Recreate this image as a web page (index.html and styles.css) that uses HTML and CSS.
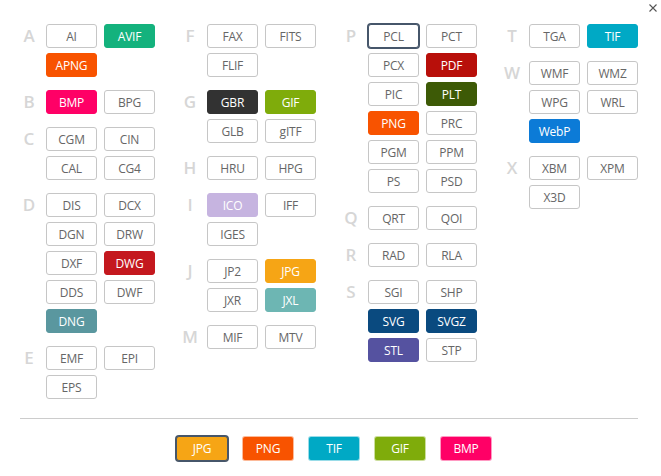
FILE: index.html
```html
<!DOCTYPE html>
<html>
<head>
<meta charset="utf-8">
<link rel="stylesheet" href="styles.css">
</head>
<body>
<div class="dialog">
  <div class="topbar">
    <svg class="close" width="8" height="8" viewBox="0 0 8 8"><path d="M0.5 0.5 L7.5 7.5 M7.5 0.5 L0.5 7.5" stroke="#555" stroke-width="1.1" fill="none"/></svg>
  </div>
  <div class="main">
    <div class="col">
      <div class="group"><div class="letter">A</div><div class="btns">
        <span class="b">AI</span><span class="b c avif">AVIF</span><span class="b c png">APNG</span></div></div>
      <div class="group"><div class="letter">B</div><div class="btns">
        <span class="b c bmp">BMP</span><span class="b">BPG</span></div></div>
      <div class="group"><div class="letter">C</div><div class="btns">
        <span class="b">CGM</span><span class="b">CIN</span><span class="b">CAL</span><span class="b">CG4</span></div></div>
      <div class="group"><div class="letter">D</div><div class="btns">
        <span class="b">DIS</span><span class="b">DCX</span><span class="b">DGN</span><span class="b">DRW</span><span class="b">DXF</span><span class="b c dwg">DWG</span><span class="b">DDS</span><span class="b">DWF</span><span class="b c dng">DNG</span></div></div>
      <div class="group"><div class="letter">E</div><div class="btns">
        <span class="b">EMF</span><span class="b">EPI</span><span class="b">EPS</span></div></div>
    </div>
    <div class="col">
      <div class="group"><div class="letter">F</div><div class="btns">
        <span class="b">FAX</span><span class="b">FITS</span><span class="b">FLIF</span></div></div>
      <div class="group"><div class="letter">G</div><div class="btns">
        <span class="b c gbr">GBR</span><span class="b c gif">GIF</span><span class="b">GLB</span><span class="b">gITF</span></div></div>
      <div class="group"><div class="letter">H</div><div class="btns">
        <span class="b">HRU</span><span class="b">HPG</span></div></div>
      <div class="group"><div class="letter">I</div><div class="btns">
        <span class="b c ico">ICO</span><span class="b">IFF</span><span class="b">IGES</span></div></div>
      <div class="group"><div class="letter">J</div><div class="btns">
        <span class="b">JP2</span><span class="b c jpg">JPG</span><span class="b">JXR</span><span class="b c jxl">JXL</span></div></div>
      <div class="group"><div class="letter">M</div><div class="btns">
        <span class="b">MIF</span><span class="b">MTV</span></div></div>
    </div>
    <div class="col">
      <div class="group"><div class="letter">P</div><div class="btns">
        <span class="b sel">PCL</span><span class="b">PCT</span><span class="b">PCX</span><span class="b c pdf">PDF</span><span class="b">PIC</span><span class="b c plt">PLT</span><span class="b c png">PNG</span><span class="b">PRC</span><span class="b">PGM</span><span class="b">PPM</span><span class="b">PS</span><span class="b">PSD</span></div></div>
      <div class="group"><div class="letter">Q</div><div class="btns">
        <span class="b">QRT</span><span class="b">QOI</span></div></div>
      <div class="group"><div class="letter">R</div><div class="btns">
        <span class="b">RAD</span><span class="b">RLA</span></div></div>
      <div class="group"><div class="letter">S</div><div class="btns">
        <span class="b">SGI</span><span class="b">SHP</span><span class="b c svg">SVG</span><span class="b c svg">SVGZ</span><span class="b c stl">STL</span><span class="b">STP</span></div></div>
    </div>
    <div class="col">
      <div class="group"><div class="letter">T</div><div class="btns">
        <span class="b">TGA</span><span class="b c tif">TIF</span></div></div>
      <div class="group"><div class="letter">W</div><div class="btns">
        <span class="b">WMF</span><span class="b">WMZ</span><span class="b">WPG</span><span class="b">WRL</span><span class="b c webp">WebP</span></div></div>
      <div class="group"><div class="letter">X</div><div class="btns">
        <span class="b">XBM</span><span class="b">XPM</span><span class="b">X3D</span></div></div>
    </div>
  </div>
  <div class="divider"></div>
  <div class="recent">
    <span class="rb jpg sel">JPG</span>
    <span class="rb png">PNG</span>
    <span class="rb tif">TIF</span>
    <span class="rb gif">GIF</span>
    <span class="rb bmp">BMP</span>
  </div>
</div>
</body>
</html>
```
FILE: styles.css
```css
* { box-sizing: border-box; }
html, body { margin: 0; padding: 0; background: #fff; }
body { font-family: "Open Sans", "Noto Sans", sans-serif; }

.dialog { width: 661px; height: 476px; background: #fff; }

.topbar {
  height: 24px;
  display: flex;
  justify-content: flex-end;
  align-items: flex-start;
  padding: 4px 4px 0 0;
}
.close { display: block; }

.main {
  height: 394px;
  display: flex;
  padding-left: 19px;
  column-gap: 25px;
}
.col {
  width: 136px;
  display: flex;
  flex-direction: column;
  row-gap: 13px;
}
.group { display: flex; align-items: flex-start; }
.letter {
  width: 20px;
  margin-right: 7px;
  height: 24px;
  line-height: 24px;
  text-align: center;
  font-size: 17px;
  font-weight: 600;
  color: #d6d6d6;
}
.btns {
  display: grid;
  grid-template-columns: 51px 51px;
  grid-auto-rows: 24px;
  column-gap: 7px;
  row-gap: 5px;
}
.b, .rb {
  display: flex;
  align-items: center;
  justify-content: center;
  border: 1px solid #c6c6c6;
  border-radius: 3px;
  font-size: 12px;
  color: #666;
  background: #fff;
  letter-spacing: -0.2px;
}
.c, .rb { color: #fff; }
.sel { border-color: #46566a; box-shadow: 0 0 0 1px #46566a; }

.avif { background: #14b27d; border-color: #14b27d; }
.png { background: #f85300; border-color: #f85300; }
.bmp { background: #ff0066; border-color: #ff0066; }
.gbr { background: #323232; border-color: #323232; }
.gif { background: #7fac0b; border-color: #7fac0b; }
.dwg { background: #c4181e; border-color: #c4181e; }
.dng { background: #5a979f; border-color: #5a979f; }
.ico { background: #c6b4e0; border-color: #c6b4e0; }
.jpg { background: #f6a515; border-color: #f6a515; }
.jxl { background: #6db6b3; border-color: #6db6b3; }
.pdf { background: #b80f0a; border-color: #b80f0a; }
.plt { background: #3d5a06; border-color: #3d5a06; }
.svg { background: #0a4a7f; border-color: #0a4a7f; }
.stl { background: #5552a0; border-color: #5552a0; }
.tif { background: #00a9c5; border-color: #00a9c5; }
.webp { background: #0c7bd7; border-color: #0c7bd7; }

.rb { border-color: rgba(255,255,255,0.6); }
.rb.sel { border-color: #46566a; }

.divider {
  height: 1px;
  background: #cccccc;
  margin: 0 23px 0 20px;
}
.recent {
  display: flex;
  column-gap: 14px;
  padding: 17px 0 0 176px;
}
.rb { width: 52px; height: 25px; }
```
